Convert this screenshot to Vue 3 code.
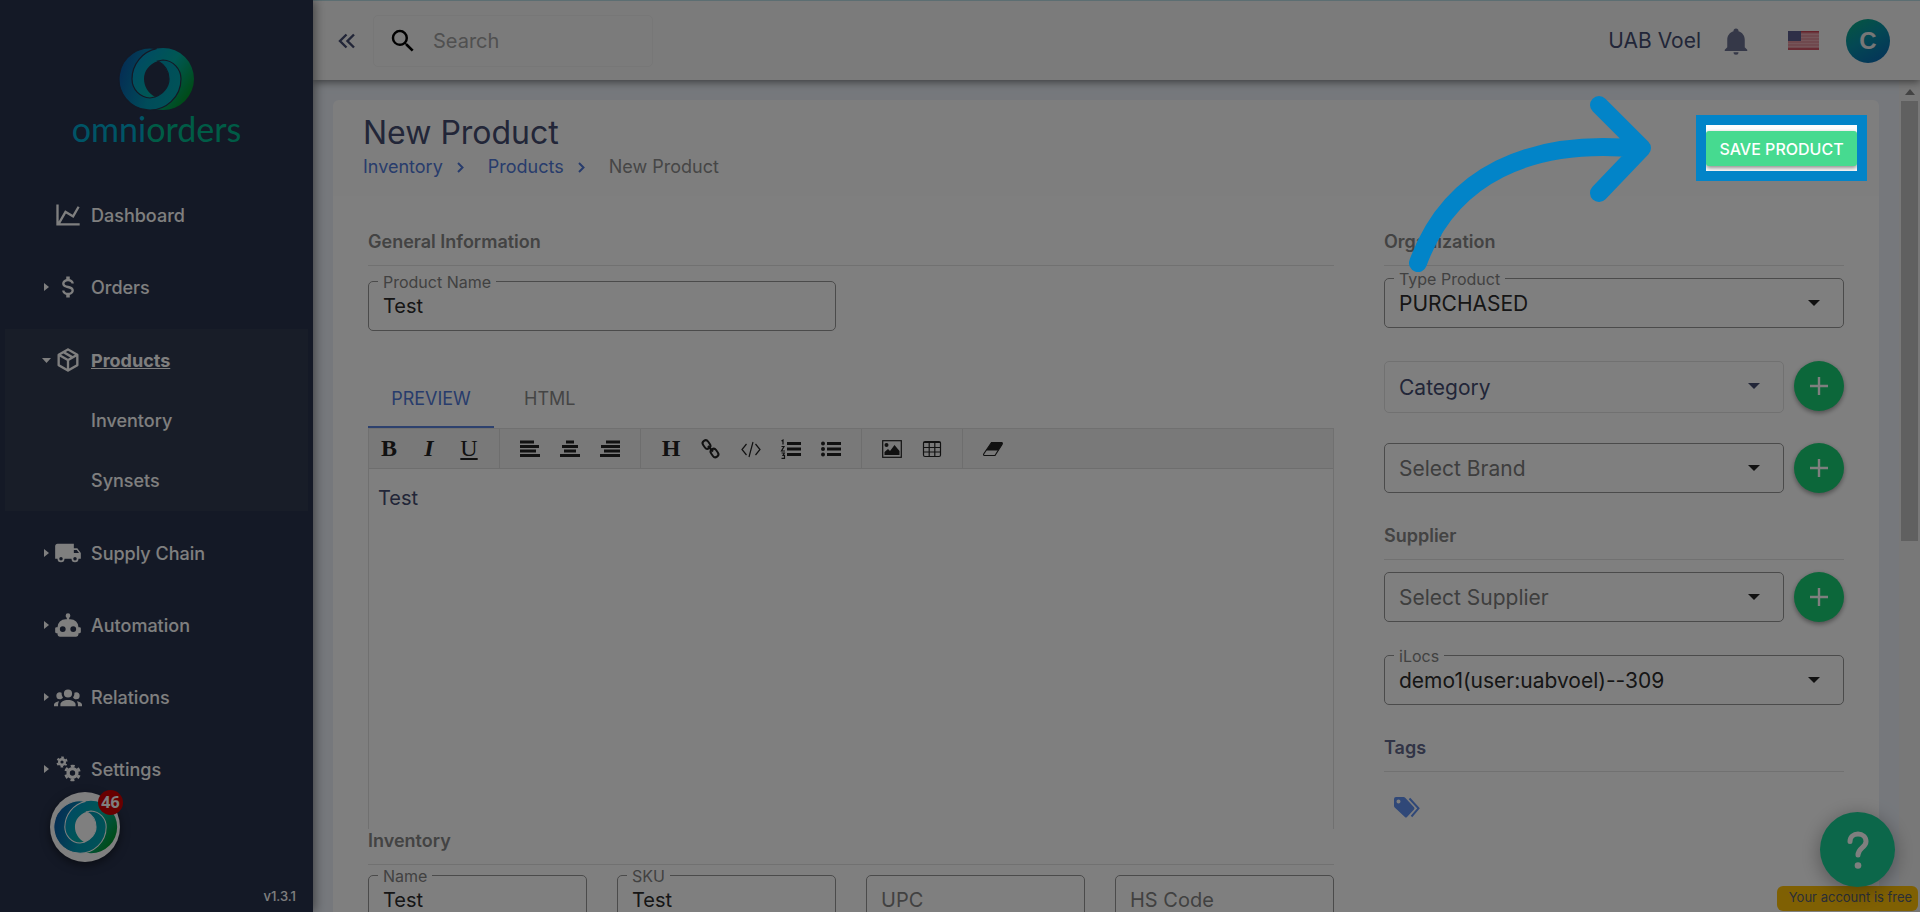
<script setup>
import { ref } from 'vue'

const navTop = [
  { label: 'Dashboard', icon: 'M16,11.78L20.24,4.45L21.97,5.45L16.74,14.5L10.23,10.75L5.46,19H22V21H2V3H4V17.54L9.5,8L16,11.78Z', caret: false },
  { label: 'Orders', icon: 'M7,15H9C9,16.08 10.37,17 12,17C13.63,17 15,16.08 15,15C15,13.9 13.96,13.5 11.76,12.97C9.64,12.44 7,11.78 7,9C7,7.21 8.47,5.69 10.5,5.18V3H13.5V5.18C15.53,5.69 17,7.21 17,9H15C15,7.92 13.63,7 12,7C10.37,7 9,7.92 9,9C9,10.1 10.04,10.5 12.24,11.03C14.36,11.56 17,12.22 17,15C17,16.79 15.53,18.31 13.5,18.82V21H10.5V18.82C8.47,18.31 7,16.79 7,15Z', caret: true },
]
const navBottom = [
  { label: 'Supply Chain', icon: 'M18,18.5A1.5,1.5 0 0,1 16.5,17A1.5,1.5 0 0,1 18,15.5A1.5,1.5 0 0,1 19.5,17A1.5,1.5 0 0,1 18,18.5M19.5,9.5L21.46,12H17V9.5M6,18.5A1.5,1.5 0 0,1 4.5,17A1.5,1.5 0 0,1 6,15.5A1.5,1.5 0 0,1 7.5,17A1.5,1.5 0 0,1 6,18.5M20,8H17V4H3C1.89,4 1,4.89 1,6V17H3A3,3 0 0,0 6,20A3,3 0 0,0 9,17H15A3,3 0 0,0 18,20A3,3 0 0,0 21,17H23V12L20,8Z' },
  { label: 'Automation', icon: 'M12,2A2,2 0 0,1 14,4C14,4.74 13.6,5.39 13,5.73V7H14A7,7 0 0,1 21,14H22A1,1 0 0,1 23,15V18A1,1 0 0,1 22,19H21V20A2,2 0 0,1 19,22H5A2,2 0 0,1 3,20V19H2A1,1 0 0,1 1,18V15A1,1 0 0,1 2,14H3A7,7 0 0,1 10,7H11V5.73C10.4,5.39 10,4.74 10,4A2,2 0 0,1 12,2M7.5,13A2.5,2.5 0 0,0 5,15.5A2.5,2.5 0 0,0 7.5,18A2.5,2.5 0 0,0 10,15.5A2.5,2.5 0 0,0 7.5,13M16.5,13A2.5,2.5 0 0,0 14,15.5A2.5,2.5 0 0,0 16.5,18A2.5,2.5 0 0,0 19,15.5A2.5,2.5 0 0,0 16.5,13Z' },
  { label: 'Relations', icon: 'M12,5.5A3.5,3.5 0 0,1 15.5,9A3.5,3.5 0 0,1 12,12.5A3.5,3.5 0 0,1 8.5,9A3.5,3.5 0 0,1 12,5.5M5,8C5.56,8 6.08,8.15 6.53,8.42C6.38,9.85 6.8,11.27 7.66,12.38C7.16,13.34 6.16,14 5,14A3,3 0 0,1 2,11A3,3 0 0,1 5,8M19,8A3,3 0 0,1 22,11A3,3 0 0,1 19,14C17.84,14 16.84,13.34 16.34,12.38C17.2,11.27 17.62,9.85 17.47,8.42C17.92,8.15 18.44,8 19,8M5.5,18.25C5.5,16.18 8.41,14.5 12,14.5C15.59,14.5 18.5,16.18 18.5,18.25V20H5.5V18.25M0,20V18.5C0,17.11 1.89,15.94 4.45,15.6C3.86,16.28 3.5,17.22 3.5,18.25V20H0M24,20H20.5V18.25C20.5,17.22 20.14,16.28 19.55,15.6C22.11,15.94 24,17.11 24,18.5V20Z' },
  { label: 'Settings', icon: '' },
]

const productName = ref('Test')
const inventory = ref([
  { id: 'inv-name', label: 'Name', value: 'Test' },
  { id: 'inv-sku', label: 'SKU', value: 'Test' },
  { id: 'inv-upc', label: 'UPC', value: '' },
  { id: 'inv-hs', label: 'HS Code', value: '' },
])
</script>

<template>
  <div class="app">
    <svg class="defs" width="0" height="0" aria-hidden="true">
      <defs>
        <linearGradient id="ringBlue" gradientUnits="userSpaceOnUse" x1="119" y1="70" x2="182" y2="88">
          <stop offset="0" stop-color="#0a5aa8" /><stop offset="0.55" stop-color="#0098b4" /><stop offset="1" stop-color="#00a6b0" />
        </linearGradient>
        <linearGradient id="ringGreen" gradientUnits="userSpaceOnUse" x1="135" y1="62" x2="188" y2="98">
          <stop offset="0" stop-color="#0096c8" /><stop offset="0.5" stop-color="#00b0a8" /><stop offset="1" stop-color="#00962c" />
        </linearGradient>
      </defs>
      <symbol id="rings" viewBox="118 47 77 64">
        <path fill="url(#ringGreen)" fill-rule="evenodd" d="M163 48A31 31 0 1 1 163 110A31 31 0 1 1 163 48ZM158 61C149 64 144 71 144 79C144 86 148 93 155 97C163 94 169 87 169 79C169 72 165 65 158 61Z" />
        <path class="gap" fill="url(#ringBlue)" d="M156.5 48.7A31 31 0 1 0 181 79A19 19 0 0 0 163 60L158 61C165 65 169 72 169 79C169 87 163 94 155 97L150 98A19 19 0 0 1 132 79A31 31 0 0 1 156.5 48.7Z" />
      </symbol>
    </svg>

    <aside class="sidebar">
      <a class="brand" href="#" aria-label="omniorders">
        <svg class="brand-mark" viewBox="0 0 77 64"><use href="#rings" width="77" height="64" /></svg>
        <span class="wordmark"><span class="omni">omni</span><span class="orders">orders</span></span>
      </a>
      <nav class="nav">
        <a v-for="item in navTop" :key="item.label" class="nav-item" href="#">
          <span class="caret"><svg v-if="item.caret" width="5" height="8" viewBox="0 0 5 8"><path d="M0 0L5 4L0 8Z" /></svg></span>
          <svg class="nav-icon" viewBox="0 0 24 24"><path :d="item.icon" /></svg>
          <span>{{ item.label }}</span>
        </a>
        <div class="nav-group">
          <a class="nav-item active" href="#">
            <span class="caret"><svg width="9" height="5" viewBox="0 0 9 5"><path d="M0 0H9L4.5 5Z" /></svg></span>
            <svg class="nav-icon" viewBox="0 0 24 24"><path d="M21,16.5C21,16.88 20.79,17.21 20.47,17.38L12.57,21.82C12.41,21.94 12.21,22 12,22C11.79,22 11.59,21.94 11.43,21.82L3.53,17.38C3.21,17.21 3,16.88 3,16.5V7.5C3,7.12 3.21,6.79 3.53,6.62L11.43,2.18C11.59,2.06 11.79,2 12,2C12.21,2 12.41,2.06 12.57,2.18L20.47,6.62C20.79,6.79 21,7.12 21,7.5V16.5M12,4.15L10.11,5.22L16,8.61L17.96,7.5L12,4.15M6.04,7.5L12,10.85L13.96,9.75L8.08,6.35L6.04,7.5M5,15.91L11,19.29V12.58L5,9.21V15.91M19,15.91V9.21L13,12.58V19.29L19,15.91Z" /></svg>
            <span class="nav-current">Products</span>
          </a>
          <a class="nav-item sub" href="#">Inventory</a>
          <a class="nav-item sub" href="#">Synsets</a>
        </div>
        <a v-for="item in navBottom" :key="item.label" class="nav-item" href="#">
          <span class="caret"><svg width="5" height="8" viewBox="0 0 5 8"><path d="M0 0L5 4L0 8Z" /></svg></span>
          <svg v-if="item.icon" class="nav-icon" viewBox="0 0 24 24"><path :d="item.icon" /></svg>
          <svg v-else class="nav-icon gears" viewBox="0 0 28 28">
            <circle cx="8" cy="7" r="2.8" stroke-width="2.4" />
            <circle cx="8" cy="7" r="4.6" stroke-width="2" stroke-dasharray="2.4 2.417" stroke-dashoffset="1.2" transform="rotate(30 8 7)" />
            <circle cx="18.5" cy="18" r="4.4" stroke-width="3.4" />
            <circle cx="18.5" cy="18" r="7" stroke-width="2.6" stroke-dasharray="3.8 3.53" stroke-dashoffset="1.9" transform="rotate(30 18.5 18)" />
          </svg>
          <span>{{ item.label }}</span>
        </a>
      </nav>
      <span class="version">v1.3.1</span>
      <button class="bubble" aria-label="Notifications">
        <svg viewBox="0 0 77 64"><use href="#rings" width="77" height="64" /></svg>
        <span class="bubble-count">46</span>
      </button>
    </aside>

    <div class="workspace">
      <header class="topbar">
        <button class="collapse" aria-label="Collapse menu">
          <svg width="18" height="16" viewBox="0 0 18 16"><path d="M8.5 1.5L2 8L8.5 14.5M16 1.5L9.5 8L16 14.5" /></svg>
        </button>
        <label class="search">
          <svg width="30" height="30" viewBox="0 0 24 24"><path d="M15.5 14h-.79l-.28-.27A6.471 6.471 0 0 0 16 9.5 6.5 6.5 0 1 0 9.5 16c1.61 0 3.09-.59 4.23-1.57l.27.28v.79l5 4.99L20.49 19l-4.99-5zm-6 0C7.01 14 5 11.99 5 9.5S7.01 5 9.5 5 14 7.01 14 9.5 11.99 14 9.5 14z" /></svg>
          <input type="search" placeholder="Search" aria-label="Search" />
        </label>
        <span class="spacer"></span>
        <span class="account">UAB Voel</span>
        <button class="plain bell" aria-label="Alerts">
          <svg width="30" height="30" viewBox="0 0 24 24"><path d="M21,19V20H3V19L5,17V11C5,7.9 7.03,5.17 10,4.29C10,4.19 10,4.1 10,4A2,2 0 0,1 12,2A2,2 0 0,1 14,4C14,4.1 14,4.19 14,4.29C16.97,5.17 19,7.9 19,11V17L21,19M14,21A2,2 0 0,1 12,23A2,2 0 0,1 10,21" /></svg>
        </button>
        <button class="plain flag" aria-label="Language">
          <svg width="31" height="19" viewBox="0 0 31 19">
            <rect width="31" height="19" fill="#e0929c" />
            <path stroke="#eaaab2" d="M0 3.5H31M0 6.5H31M0 9.5H31M0 12.5H31M0 15.5H31" stroke-width="1" />
            <path stroke="#cc4454" stroke-width="1.5" d="M0 .75H31M0 18H31" />
            <rect width="13" height="10" fill="#5c5f8e" />
          </svg>
        </button>
        <button class="avatar" aria-label="Profile">C</button>
      </header>

      <div class="scroller">
        <main class="page">
          <section class="title-card">
            <h1>New Product</h1>
            <nav class="crumbs">
              <a href="#">Inventory</a>
              <svg width="7" height="11" viewBox="0 0 7 11"><path d="M1 1L5.5 5.5L1 10" /></svg>
              <a href="#">Products</a>
              <svg width="7" height="11" viewBox="0 0 7 11"><path d="M1 1L5.5 5.5L1 10" /></svg>
              <span>New Product</span>
            </nav>
            <button class="save">SAVE PRODUCT</button>
          </section>

          <section class="form-card">
            <div class="main-col">
              <h2>General Information</h2>
              <div class="row general">
                <div class="field wide">
                  <label for="product-name">Product Name</label>
                  <input id="product-name" v-model="productName" type="text" />
                </div>
              </div>

              <div class="tabs" role="tablist">
                <button class="tab selected" role="tab" aria-selected="true">PREVIEW</button>
                <button class="tab" role="tab" aria-selected="false">HTML</button>
              </div>
              <div class="editor">
                <div class="toolbar">
                  <div class="tools">
                    <button class="glyph bold" aria-label="Bold">B</button>
                    <button class="glyph italic" aria-label="Italic">I</button>
                    <button class="glyph under" aria-label="Underline">U</button>
                  </div>
                  <div class="tools">
                    <button aria-label="Align left"><svg viewBox="0 0 20 18"><path class="bars" d="M0 2H14M0 6.5H19M0 11H16M0 15.5H20" /></svg></button>
                    <button aria-label="Align centre"><svg viewBox="0 0 20 18"><path class="bars" d="M6 2H14M2 6.5H18M4 11H16M0 15.5H20" /></svg></button>
                    <button aria-label="Align right"><svg viewBox="0 0 20 18"><path class="bars" d="M6 2H20M1 6.5H20M4 11H20M0 15.5H20" /></svg></button>
                  </div>
                  <div class="tools">
                    <button class="glyph" aria-label="Heading">H</button>
                    <button aria-label="Link"><svg viewBox="0 0 20 18"><g class="line thick"><rect x="2.5" y="0" width="6" height="9" rx="3" transform="rotate(-35 5.5 4.5)" /><rect x="10.5" y="8.5" width="6" height="9" rx="3" transform="rotate(-35 13.5 13)" /><path d="M7 6L12 11.5" /></g></svg></button>
                    <button aria-label="Code"><svg viewBox="0 0 20 18"><path class="line" d="M5.5 4L1 9.5L5.5 15M14.5 4L19 9.5L14.5 15M12 2L8 17" /></svg></button>
                    <button aria-label="Numbered list"><svg viewBox="0 0 20 18"><path class="bars" d="M6 3.5H20M6 9H20M6 14.5H20" /><path class="line" d="M.5 1L2 0V4.5M.5 6.500H3L.5 11H4M.5 13H3.300L2 15.300H3.500V18.300H.5" /></svg></button>
                    <button aria-label="Bulleted list"><svg viewBox="0 0 20 18"><path class="bars" d="M6 3.5H20M6 9H20M6 14.5H20" /><circle cx="2" cy="3.5" r="2" /><circle cx="2" cy="9" r="2" /><circle cx="2" cy="14.5" r="2" /></svg></button>
                  </div>
                  <div class="tools">
                    <button aria-label="Image"><svg viewBox="0 0 20 18"><rect class="line" x=".7" y=".7" width="18.6" height="16.6" /><circle cx="4.5" cy="5" r="2" /><path d="M2.5 15V12L6 9L8 11L12.5 5L17.5 11V15Z" /></svg></button>
                    <button aria-label="Table"><svg viewBox="0 0 20 18"><rect class="line" x="1.5" y="1.5" width="17" height="15" rx="1.5" /><path class="line" d="M1.5 2.5H18.5M1.5 7.5H18.5M1.5 12H18.5M7.2 2V16M12.8 2V16" /></svg></button>
                  </div>
                  <div class="tools">
                    <button aria-label="Clear formatting"><svg viewBox="0 0 20 18"><path class="line" d="M8.5 2.5H18.8Q19.8 2.8 19 4.5L12 15.5H1.2Q0 15 1 13.5Z" /><path d="M8.5 2.5H18.8Q19.8 2.8 19 4.5L15.2 10.500H3.200Z" /></svg></button>
                  </div>
                </div>
                <div class="editable" contenteditable="true">Test</div>
              </div>

              <h2>Inventory</h2>
              <div class="row inventory">
                <div v-for="f in inventory" :key="f.id" class="field">
                  <label :for="f.id" :class="{ resting: !f.value }">{{ f.label }}</label>
                  <input :id="f.id" v-model="f.value" type="text" />
                </div>
              </div>
            </div>

            <div class="side-col">
              <h2>Organization</h2>
              <div class="field first">
                <label for="type">Type Product</label>
                <select id="type"><option>PURCHASED</option></select>
                <svg class="drop" width="12" height="6" viewBox="0 0 12 6"><path d="M0 0H12L6 6Z" /></svg>
              </div>
              <div class="with-add spaced">
                <div class="field faint">
                  <select aria-label="Category"><option>Category</option></select>
                  <svg class="drop" width="12" height="6" viewBox="0 0 12 6"><path d="M0 0H12L6 6Z" /></svg>
                </div>
                <button class="add" aria-label="Add category"><svg width="18" height="18" viewBox="0 0 18 18"><path d="M9 0V18M0 9H18" /></svg></button>
              </div>
              <div class="with-add next">
                <div class="field muted">
                  <select aria-label="Brand"><option>Select Brand</option></select>
                  <svg class="drop" width="12" height="6" viewBox="0 0 12 6"><path d="M0 0H12L6 6Z" /></svg>
                </div>
                <button class="add" aria-label="Add brand"><svg width="18" height="18" viewBox="0 0 18 18"><path d="M9 0V18M0 9H18" /></svg></button>
              </div>
              <h2>Supplier</h2>
              <div class="with-add first">
                <div class="field muted">
                  <select aria-label="Supplier"><option>Select Supplier</option></select>
                  <svg class="drop" width="12" height="6" viewBox="0 0 12 6"><path d="M0 0H12L6 6Z" /></svg>
                </div>
                <button class="add" aria-label="Add supplier"><svg width="18" height="18" viewBox="0 0 18 18"><path d="M9 0V18M0 9H18" /></svg></button>
              </div>
              <div class="field spaced">
                <label for="ilocs">iLocs</label>
                <select id="ilocs"><option>demo1(user:uabvoel)--309</option></select>
                <svg class="drop" width="12" height="6" viewBox="0 0 12 6"><path d="M0 0H12L6 6Z" /></svg>
              </div>
              <h2 class="navy">Tags</h2>
              <button class="plain tags" aria-label="Add tags">
                <svg width="26" height="21" viewBox="0 0 26 21">
                  <path fill-rule="evenodd" d="M0 2A2 2 0 0 1 2 0H9.5Q10.5 0 11.2.7L20 10.2Q21 11.3 20 12.4L13 20Q12 21 10.9 20L.7 10.5Q0 9.8 0 8.8ZM4.5 2.6A2 2 0 1 0 4.5 6.6A2 2 0 1 0 4.5 2.6Z" />
                  <path class="tag-edge" d="M15.5 1.5L24.5 11.3L17.5 19.5" />
                </svg>
              </button>
            </div>
          </section>
        </main>
        <div class="scrollbar" aria-hidden="true">
          <svg width="10" height="6" viewBox="0 0 10 6"><path d="M5 0L10 6H0Z" /></svg>
          <div class="thumb"></div>
        </div>
      </div>
    </div>

    <span class="plan">Your account is free</span>
    <button class="help" aria-label="Help">
      <svg width="22" height="38" viewBox="0 0 22 38"><path d="M3 10.5C3 6 6.5 3 11 3S19 6 19 10.5C19 16.5 11 17 11 24" /><circle cx="11" cy="34.5" r="3.3" /></svg>
    </button>

    <div class="spotlight"></div>
    <svg class="pointer" width="244" height="180" viewBox="1408 95 244 180" aria-hidden="true">
      <path d="M1418 263C1450 175 1530 138 1640 149M1599 105L1642 148L1599 193" />
    </svg>
  </div>
</template>

<style>
body { margin: 0; overflow: hidden; }
</style>

<style scoped>
.app {
  --navy: #444c70;
  position: relative;
  display: flex;
  height: 100vh;
  overflow: hidden;
  font-family: Inter, "Open Sans", sans-serif;
  color: var(--navy);
  background: #ecf1f9;
}
.app * { box-sizing: border-box; }
.defs { position: absolute; }
button, input, select { font: inherit; color: inherit; }
button { border: 0; padding: 0; background: none; cursor: pointer; }
a { color: inherit; text-decoration: none; }
.gap { stroke: var(--gap); stroke-width: 1.2; }

.sidebar {
  position: relative;
  z-index: 3;
  flex: 0 0 313px;
  background: #28324c;
  color: #fff;
  box-shadow: 2px 0 10px rgba(0, 0, 0, 0.45);
}
.brand { --gap: #28324c; display: flex; flex-direction: column; align-items: center; height: 185px; padding-top: 47px; }
.brand-mark { width: 77px; height: 64px; }
.wordmark { font: 400 34px/36px Lato, sans-serif; }
.omni { color: #00a9cc; }
.orders { color: #00b98c; }
.nav { display: flex; flex-direction: column; gap: 12px; font-size: 18px; font-weight: 500; }
.nav-item { display: flex; align-items: center; height: 60px; padding-left: 42px; }
.caret { display: flex; justify-content: center; width: 9px; fill: #fff; }
.nav-icon { width: 28px; height: 28px; margin: 0 9px 0 3px; fill: #fff; }
.gears circle { fill: none; stroke: #fff; }
.nav-group { margin: 0 5px; padding: 1px 0; background: #303a50; }
.nav-group .nav-item { padding-left: 37px; }
.nav-group .sub { padding-left: 86px; }
.nav-current { font-weight: 700; text-decoration: underline; }
.version { position: absolute; right: 17px; bottom: 6px; font-size: 13px; line-height: 20px; font-weight: 500; }
.bubble {
  --gap: #fff;
  position: absolute;
  left: 50px;
  bottom: 50px;
  display: grid;
  place-items: center;
  width: 70px;
  height: 70px;
  border-radius: 50%;
  background: #fff;
  box-shadow: 0 3px 10px rgba(0, 0, 0, 0.5);
}
.bubble > svg { width: 65px; height: 54px; }
.bubble-count {
  position: absolute;
  top: -2px;
  right: -3px;
  width: 25px;
  height: 25px;
  border-radius: 50%;
  background: #d00000;
  color: #fff;
  font: 700 16px/25px "Open Sans", sans-serif;
  text-align: center;
}

.workspace { flex: 1; min-width: 0; display: flex; flex-direction: column; }
.topbar {
  position: relative;
  z-index: 2;
  flex: 0 0 80px;
  display: flex;
  align-items: center;
  padding: 0 30px 0 25px;
  border-top: 1px solid #b9dce4;
  background: #f7f7f7;
  box-shadow: 0 2px 8px rgba(0, 0, 0, 0.5);
}
.collapse { display: flex; }
.collapse path { fill: none; stroke: var(--navy); stroke-width: 2.4; }
.search {
  display: flex;
  align-items: center;
  width: 280px;
  height: 52px;
  margin-left: 17px;
  padding-left: 14px;
  border: 1px solid #eeeeee;
  border-radius: 5px;
  color: #111;
}
.search input { width: 200px; margin-left: 15px; padding: 0; border: 0; outline: 0; background: none; font-size: 20px; }
.search input::placeholder { color: #a0a0a0; opacity: 1; }
.spacer { flex: 1; }
.account { font-size: 21px; }
.plain { display: flex; }
.bell { margin-left: 20px; fill: #6a7090; }
.flag { margin-left: 37px; }
.avatar {
  width: 44px;
  height: 44px;
  margin-left: 27px;
  border-radius: 50%;
  background: linear-gradient(150deg, #0cae80, #0890a8 45%, #0a62b4);
  color: #eee;
  font: 700 24px/44px "Liberation Sans", sans-serif;
}

.scroller { flex: 1; min-height: 0; display: flex; }
.page { flex: 1; min-width: 0; padding: 20px 20px 0; overflow: hidden; }
.scrollbar {
  flex: 0 0 21px;
  display: flex;
  flex-direction: column;
  align-items: center;
  padding: 9px 2px 0;
  background: #f1f1f1;
  fill: #888;
}
.thumb { flex: 0 0 440px; align-self: stretch; margin-top: 6px; background: #c1c1c1; }

.title-card {
  position: relative;
  height: 96px;
  padding: 13px 30px 0;
  border-radius: 6px 6px 0 0;
  background: #fdfdfd;
}
h1 { margin: 0; font-size: 32px; line-height: 40px; font-weight: 400; }
.crumbs { display: flex; align-items: center; margin-top: 2px; font-size: 18px; line-height: 24px; color: #8c8c8c; }
.crumbs a { color: #5078d8; }
.crumbs svg { margin: 0 24px 0 14px; fill: none; stroke: #5078d8; stroke-width: 2; }
.save {
  position: absolute;
  top: 31px;
  right: 22px;
  width: 151px;
  height: 35px;
  border-radius: 3px;
  background: #46da90;
  box-shadow: 0 2px 4px rgba(0, 0, 0, 0.45);
  color: #fff;
  font-size: 16px;
  font-weight: 500;
}

.form-card {
  display: grid;
  grid-template-columns: minmax(0, 21fr) minmax(0, 10fr);
  gap: 50px;
  min-height: 760px;
  padding: 34px 35px 0;
  background: #fff;
}
h2 {
  margin: 0;
  padding-bottom: 11px;
  border-bottom: 1px solid #e2e2e2;
  color: #868686;
  font-size: 18px;
  line-height: 24px;
  font-weight: 600;
}
h2.navy { color: #62688c; }
.row { display: grid; grid-template-columns: repeat(4, minmax(0, 1fr)); gap: 30px; }
.general { margin-top: 15px; }
.inventory { margin-top: 10px; }
.wide { grid-column: span 2; }
.field { position: relative; flex: 1; height: 50px; color: #2c2c2c; }
.field input, .field select {
  width: 100%;
  height: 100%;
  padding: 0 14px;
  border: 1px solid #969696;
  border-radius: 5px;
  outline: 0;
  background: transparent;
  appearance: none;
  font-size: 20px;
}
.field select { font-size: 21px; }
.field label {
  position: absolute;
  top: -9px;
  left: 10px;
  padding: 0 5px;
  background: #fff;
  color: #838383;
  font-size: 16px;
  line-height: 20px;
}
.field label.resting { top: 13px; left: 10px; font-size: 20px; line-height: 24px; background: none; }
.drop { position: absolute; right: 24px; top: 22px; fill: #222; pointer-events: none; }
.field.faint { height: 52px; color: var(--navy); }
.faint select { border-color: #e2e2e2; }
.faint .drop { fill: var(--navy); }
.field.muted { color: #7c7c7c; }

.tabs { display: flex; height: 48px; margin-top: 49px; }
.tab { padding: 0 30px 10px; color: #8a8a8a; font-size: 18px; line-height: 24px; }
.tab:first-child { width: 126px; padding: 0 0 8px; }
.tab.selected { border-bottom: 2px solid #5a82dc; color: #5078d8; }
.editor { height: 401px; border: 1px solid #e0e0e0; border-bottom: 0; }
.toolbar { display: flex; height: 40px; border-bottom: 1px solid #dcdcdc; background: #f3f3f3; }
.tools { display: flex; padding: 0 10px; border-right: 1px solid #dcdcdc; color: #222; fill: #222; }
.tools:first-child { padding-left: 0; }
.tools:last-child { border-right: 0; }
.tools button { display: grid; place-items: center; width: 40px; height: 39px; }
.tools svg { width: 20px; height: 18px; overflow: visible; }
.bars { stroke: #222; stroke-width: 3; }
.line { fill: none; stroke: #222; stroke-width: 1.2; }
.thick { stroke-width: 2; }
.tools .glyph { font: 700 24px/39px "Liberation Serif", serif; }
.tools .italic { font-style: italic; }
.tools .under { font-weight: 400; text-decoration: underline; }
.editable { padding: 17px 9px; outline: 0; font-size: 20px; line-height: 24px; }

.first { margin-top: 12px; }
.spaced { margin-top: 33px; }
.next { margin-top: 30px; }
.with-add { display: flex; gap: 10px; }
.side-col h2:not(:first-child) { margin-top: 31px; }
.add {
  display: grid;
  place-items: center;
  flex: 0 0 50px;
  height: 50px;
  border-radius: 50%;
  background: #18cf74;
  box-shadow: 0 2px 5px rgba(0, 0, 0, 0.4);
}
.add path { stroke: #fff; stroke-width: 2.4; }
.tags { margin: 25px 0 0 10px; fill: #6090f0; }
.tag-edge { fill: none; stroke: #6090f0; stroke-width: 2; }

.plan {
  position: absolute;
  right: 2px;
  bottom: 1px;
  z-index: 4;
  width: 141px;
  height: 25px;
  padding-left: 6px;
  border-radius: 6px;
  background: #ffc107;
  color: #555d70;
  font-size: 13px;
  line-height: 22px;
  text-align: center;
}
.help {
  position: absolute;
  right: 25px;
  bottom: 25px;
  z-index: 5;
  display: grid;
  place-items: center;
  width: 75px;
  height: 75px;
  border-radius: 50%;
  background: #18cf94;
  box-shadow: 0 4px 20px rgba(0, 0, 0, 0.35);
}
.help path { fill: none; stroke: #fff; stroke-width: 5; stroke-linecap: round; }
.help circle { fill: #fff; }

.spotlight {
  position: absolute;
  top: 115px;
  right: 53px;
  z-index: 6;
  width: 171px;
  height: 66px;
  border: 10px solid #0284c8;
  box-shadow: 0 0 0 4000px rgba(0, 0, 0, 0.5);
  pointer-events: none;
}
.pointer { position: absolute; top: 95px; right: 268px; z-index: 7; pointer-events: none; }
.pointer path { fill: none; stroke: #0284c8; stroke-width: 18; stroke-linecap: round; stroke-linejoin: round; }
</style>
